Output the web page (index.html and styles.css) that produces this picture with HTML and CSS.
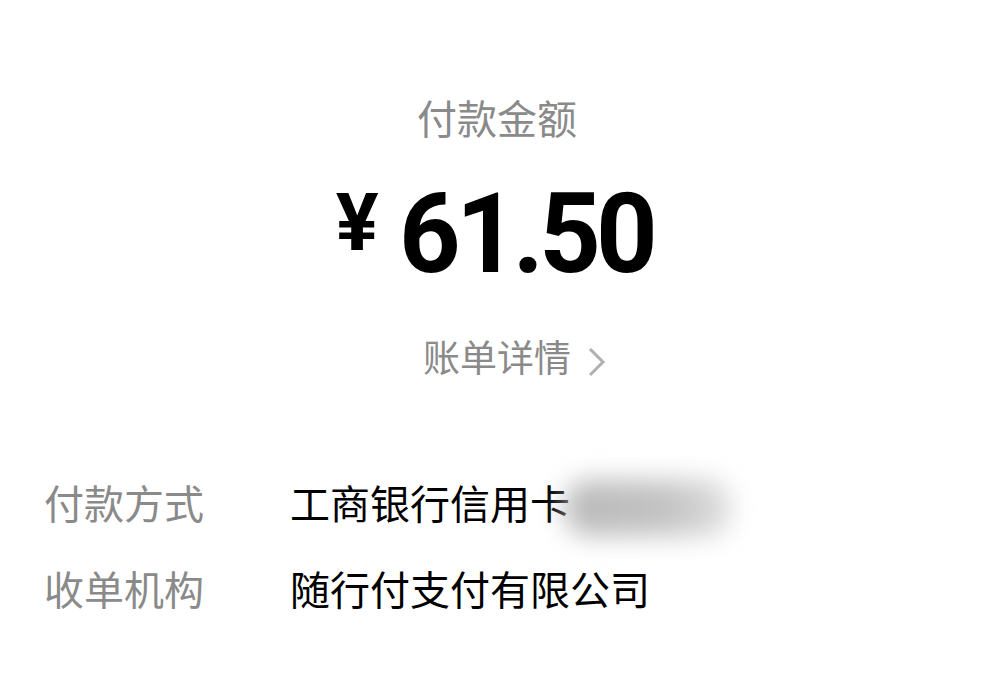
FILE: index.html
```html
<!DOCTYPE html>
<html lang="zh-CN">
<head>
    <meta charset="UTF-8">
    <title>付款详情</title>
    <link rel="stylesheet" href="styles.css">
</head>
<body>

<div class="page">

    <!--金额部分-->
    <div class="summary">
        <div class="title">付款金额</div>
        <div class="amount">
            <span class="yen">¥</span>
            <span class="num">61.50</span>
        </div>
        <a class="detail" href="javascript:;">账单详情<svg class="chevron" width="18" height="30" viewBox="0 0 18 30"><polyline points="2,2 15,15 2,28" fill="none" stroke="#b0b0b0" stroke-width="3"/></svg></a>
    </div>

    <!--信息行-->
    <ul class="info">
        <li>
            <span class="label">付款方式</span>
            <span class="value">工商银行信用卡<i class="mask"></i></span>
        </li>
        <li>
            <span class="label">收单机构</span>
            <span class="value">随行付支付有限公司</span>
        </li>
    </ul>

</div>

</body>
</html>
```

FILE: styles.css
```css
* {
margin: 0;
padding: 0;
list-style: none;
}

body {
background-color: #fff;
font-family: "Noto Sans CJK SC", "Noto Sans", sans-serif;
color: #000;
}

.page {
width: 987px;
height: 677px;
overflow: hidden;
}

/*上半部分居中*/
.summary {
display: flex;
flex-direction: column;
align-items: center;
padding-top: 93px;
padding-left: 7px;
}

.title {
font-size: 40px;
line-height: 48px;
color: #8a8a8a;
}

.amount {
display: flex;
align-items: flex-start;
margin-top: 37px;
margin-left: -10px;
font-family: Roboto, "Liberation Sans", sans-serif;
font-weight: bold;
line-height: 1;
}

.yen {
font-size: 80px;
margin-top: 5px;
margin-right: 20px;
}

/*数字稍微窄一点*/
.num {
font-size: 112px;
letter-spacing: -5px;
margin-right: -15px;
transform: scaleX(0.96);
transform-origin: left top;
}

.detail {
display: block;
margin-top: 42px;
font-size: 37px;
line-height: 48px;
color: #8a8a8a;
text-decoration: none;
white-space: nowrap;
}

/*右箭头*/
.chevron {
margin-left: 17px;
margin-right: -35px;
vertical-align: -5px;
}

.info {
margin-top: 98px;
padding-left: 44px;
}

.info li {
display: flex;
font-size: 40px;
line-height: 48px;
margin-bottom: 38px;
}

.label {
width: 246px;
color: #8a8a8a;
}

.value {
position: relative;
color: #000;
}

/*卡号打码*/
.mask {
position: absolute;
left: 274px;
top: 2px;
width: 168px;
height: 56px;
background: linear-gradient(90deg, #bababa, #c2c2c2 60%, #e0e0e0);
border-radius: 26px;
filter: blur(13px);
}
```
